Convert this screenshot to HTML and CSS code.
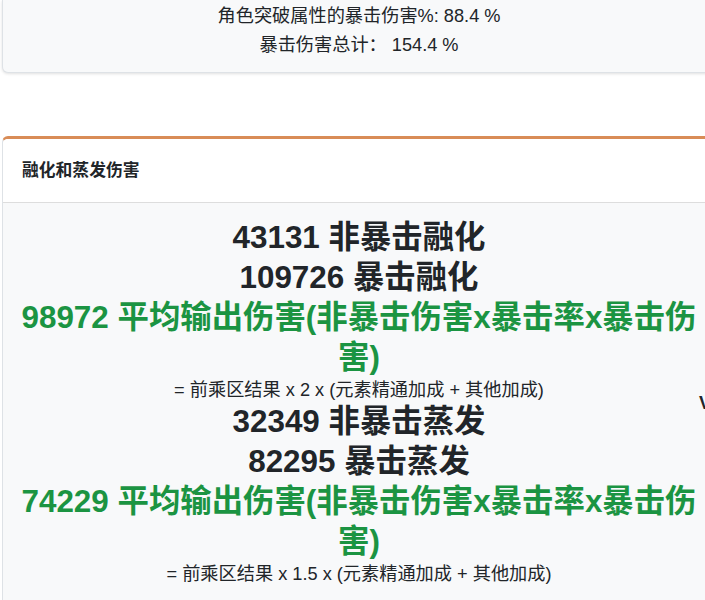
FILE: index.html
```html
<!DOCTYPE html>
<html lang="zh">
<head>
<meta charset="utf-8">
<link rel="stylesheet" href="styles.css">
</head>
<body>
<div class="page">
  <div class="card card-summary">
    <div class="summary-body">
      <div class="summary-line">角色突破属性的暴击伤害%: 88.4 %</div>
      <div class="summary-line">暴击伤害总计： 154.4 %</div>
    </div>
  </div>

  <div class="card card-reaction">
    <div class="card-header">融化和蒸发伤害</div>
    <div class="card-body">
      <div class="big">43131 非暴击融化</div>
      <div class="big">109726 暴击融化</div>
      <div class="big green">98972 平均输出伤害(非暴击伤害x暴击率x暴击伤害)</div>
      <div class="note">= 前乘区结果 x 2 x (元素精通加成 + 其他加成)</div>
      <div class="big">32349 非暴击蒸发</div>
      <div class="big">82295 暴击蒸发</div>
      <div class="big green">74229 平均输出伤害(非暴击伤害x暴击率x暴击伤害)</div>
      <div class="note">= 前乘区结果 x 1.5 x (元素精通加成 + 其他加成)</div>
    </div>
  </div>
  <span class="edge-glyph">V</span>
</div>
</body>
</html>
```

FILE: styles.css
```css
html, body {
  margin: 0;
  padding: 0;
  background: #ffffff;
  overflow: hidden;
}
body {
  font-family: "Liberation Sans", "Noto Sans CJK SC", sans-serif;
  color: #212529;
}
.page {
  position: relative;
  width: 714px;
  margin-left: 2px;
}
.card {
  box-sizing: border-box;
  width: 714px;
  background: #f8f9fa;
}
.card-summary {
  border: 1px solid #dee2e6;
  border-top: none;
  border-radius: 0 0 6px 6px;
  box-shadow: 0 1px 3px rgba(0, 0, 0, 0.12);
}
.summary-body {
  padding: 2px 16px 12px;
  text-align: center;
}
.summary-line {
  font-size: 18.2px;
  line-height: 29px;
}
.card-reaction {
  margin-top: 63px;
  border: 1px solid #dee2e6;
  border-top: 3px solid #d98c57;
  border-radius: 6px 6px 0 0;
  background: #f8f9fa;
}
.card-header {
  background: #ffffff;
  padding: 20px 19px 19px;
  font-size: 16.8px;
  font-weight: bold;
  line-height: 24px;
  border-bottom: 1px solid #dddddd;
  border-radius: 5px 5px 0 0;
}
.card-body {
  padding: 15px 16px 20px;
  text-align: center;
}
.big {
  font-size: 31.4px;
  font-weight: bold;
  line-height: 40px;
  color: #212529;
}
.big.green {
  color: #1b9442;
}
.note {
  font-size: 18.2px;
  line-height: 24px;
  color: #212529;
}
.edge-glyph {
  position: absolute;
  left: 697px;
  top: 393px;
  font-size: 18px;
  font-weight: bold;
  color: #212529;
}
```
